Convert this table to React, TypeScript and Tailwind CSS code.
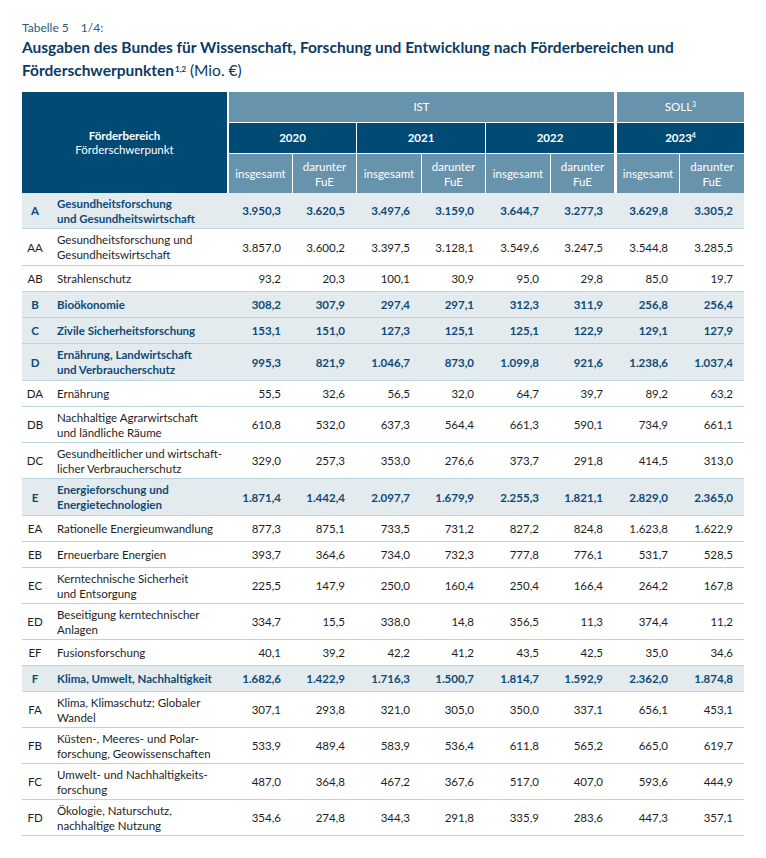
import React from 'react';

type Row = {
  code: string;
  label: string[];
  values: string[];
  main?: boolean;
  h?: string;
};

const rows: Row[] = [
  { code: 'A', label: ['Gesundheitsforschung', 'und Gesundheitswirtschaft'], values: ['3.950,3', '3.620,5', '3.497,6', '3.159,0', '3.644,7', '3.277,3', '3.629,8', '3.305,2'], main: true },
  { code: 'AA', label: ['Gesundheitsforschung und', 'Gesundheitswirtschaft'], values: ['3.857,0', '3.600,2', '3.397,5', '3.128,1', '3.549,6', '3.247,5', '3.544,8', '3.285,5'], h: 'h-[37px]' },
  { code: 'AB', label: ['Strahlenschutz'], values: ['93,2', '20,3', '100,1', '30,9', '95,0', '29,8', '85,0', '19,7'] },
  { code: 'B', label: ['Bioökonomie'], values: ['308,2', '307,9', '297,4', '297,1', '312,3', '311,9', '256,8', '256,4'], main: true },
  { code: 'C', label: ['Zivile Sicherheitsforschung'], values: ['153,1', '151,0', '127,3', '125,1', '125,1', '122,9', '129,1', '127,9'], main: true },
  { code: 'D', label: ['Ernährung, Landwirtschaft', 'und Verbraucherschutz'], values: ['995,3', '821,9', '1.046,7', '873,0', '1.099,8', '921,6', '1.238,6', '1.037,4'], main: true, h: 'h-[37px]' },
  { code: 'DA', label: ['Ernährung'], values: ['55,5', '32,6', '56,5', '32,0', '64,7', '39,7', '89,2', '63,2'] },
  { code: 'DB', label: ['Nachhaltige Agrarwirtschaft', 'und ländliche Räume'], values: ['610,8', '532,0', '637,3', '564,4', '661,3', '590,1', '734,9', '661,1'] },
  { code: 'DC', label: ['Gesundheitlicher und wirtschaft-', 'licher Verbraucherschutz'], values: ['329,0', '257,3', '353,0', '276,6', '373,7', '291,8', '414,5', '313,0'] },
  { code: 'E', label: ['Energieforschung und', 'Energietechnologien'], values: ['1.871,4', '1.442,4', '2.097,7', '1.679,9', '2.255,3', '1.821,1', '2.829,0', '2.365,0'], main: true, h: 'h-[37px]' },
  { code: 'EA', label: ['Rationelle Energieumwandlung'], values: ['877,3', '875,1', '733,5', '731,2', '827,2', '824,8', '1.623,8', '1.622,9'] },
  { code: 'EB', label: ['Erneuerbare Energien'], values: ['393,7', '364,6', '734,0', '732,3', '777,8', '776,1', '531,7', '528,5'] },
  { code: 'EC', label: ['Kerntechnische Sicherheit', 'und Entsorgung'], values: ['225,5', '147,9', '250,0', '160,4', '250,4', '166,4', '264,2', '167,8'] },
  { code: 'ED', label: ['Beseitigung kerntechnischer', 'Anlagen'], values: ['334,7', '15,5', '338,0', '14,8', '356,5', '11,3', '374,4', '11,2'] },
  { code: 'EF', label: ['Fusionsforschung'], values: ['40,1', '39,2', '42,2', '41,2', '43,5', '42,5', '35,0', '34,6'] },
  { code: 'F', label: ['Klima, Umwelt, Nachhaltigkeit'], values: ['1.682,6', '1.422,9', '1.716,3', '1.500,7', '1.814,7', '1.592,9', '2.362,0', '1.874,8'], main: true },
  { code: 'FA', label: ['Klima, Klimaschutz; Globaler', 'Wandel'], values: ['307,1', '293,8', '321,0', '305,0', '350,0', '337,1', '656,1', '453,1'] },
  { code: 'FB', label: ['Küsten-, Meeres- und Polar-', 'forschung, Geowissenschaften'], values: ['533,9', '489,4', '583,9', '536,4', '611,8', '565,2', '665,0', '619,7'] },
  { code: 'FC', label: ['Umwelt- und Nachhaltigkeits-', 'forschung'], values: ['487,0', '364,8', '467,2', '367,6', '517,0', '407,0', '593,6', '444,9'] },
  { code: 'FD', label: ['Ökologie, Naturschutz,', 'nachhaltige Nutzung'], values: ['354,6', '274,8', '344,3', '291,8', '335,9', '283,6', '447,3', '357,1'] },
];

const cols = 'grid grid-cols-[26px_179px_65px_64px_65px_64px_65px_64px_65px_65px]';

const SubHead = ({ first }: { first?: string }) => (
  <>
    <div className={`flex items-center justify-center bg-[#6893ad] border-t border-white ${first ?? 'border-l'}`}>insgesamt</div>
    <div className="flex items-center justify-center bg-[#6893ad] border-t border-l border-white text-center leading-[15px]">
      darunter<br />FuE
    </div>
  </>
);

const App = () => {
  return (
    <div className="bg-white min-h-[858px] px-[22px] pt-[20px] font-['Lato',sans-serif] text-[11.5px]">
      <div className="text-[12px] leading-[16px] text-[#2b5a80]">
        Tabelle 5<span className="ml-[12px]">1/4:</span>
      </div>
      <h1 className="text-[15.5px] leading-[23px] font-bold text-[#0b3b64]">
        Ausgaben des Bundes für Wissenschaft, Forschung und Entwicklung nach Förderbereichen und
        <br />
        Förderschwerpunkten<sup className="text-[8px] leading-none ml-px">1,2</sup> <span className="font-normal">(Mio. €)</span>
      </h1>

      <div className="mt-[10px] w-[722px]">
        {/* Kopfzeilen */}
        <div className="grid grid-cols-[205px_65px_64px_65px_64px_65px_64px_65px_65px] grid-rows-[30px_31px_40px] text-white">
          <div className="row-span-3 flex flex-col items-center justify-center bg-[#004a74] leading-[14px]">
            <span className="font-bold">Förderbereich</span>
            <span>Förderschwerpunkt</span>
          </div>
          <div className="col-span-6 flex items-center justify-center bg-[#6893ad] border-l-2 border-white">IST</div>
          <div className="col-span-2 flex items-center justify-center bg-[#6893ad] border-l-[3px] border-white">
            SOLL<sup className="text-[7px]">3</sup>
          </div>
          <div className="col-span-2 flex items-center justify-center bg-[#004a74] border-l-2 border-t border-white font-bold">2020</div>
          <div className="col-span-2 flex items-center justify-center bg-[#004a74] border-l border-t border-white font-bold">2021</div>
          <div className="col-span-2 flex items-center justify-center bg-[#004a74] border-l border-t border-white font-bold">2022</div>
          <div className="col-span-2 flex items-center justify-center bg-[#004a74] border-l-[3px] border-t border-white font-bold">
            2023<sup className="text-[7px]">4</sup>
          </div>
          <SubHead first="border-l-2" />
          <SubHead />
          <SubHead />
          <SubHead first="border-l-[3px]" />
        </div>

        {/* Datenzeilen */}
        {rows.map((r) => {
          const height = r.h ?? (r.label.length > 1 ? 'h-[36px]' : 'h-[26px]');
          return (
            <div
              key={r.code}
              className={`${cols} ${height} items-center border-b border-[#b9d5e1] leading-[15px] ${
                r.main ? 'bg-[#e4ebef] font-bold text-[#0d4a78]' : 'text-[#1e1e1e]'
              }`}
            >
              <div className="text-center">{r.code}</div>
              <div className="pl-[9px] whitespace-nowrap">
                {r.label.map((l, i) => (
                  <div key={i}>{l}</div>
                ))}
              </div>
              {r.values.map((v, i) => (
                <div key={i} className="text-right pr-[11px]">
                  {v}
                </div>
              ))}
            </div>
          );
        })}
      </div>
    </div>
  );
};

export default App;
